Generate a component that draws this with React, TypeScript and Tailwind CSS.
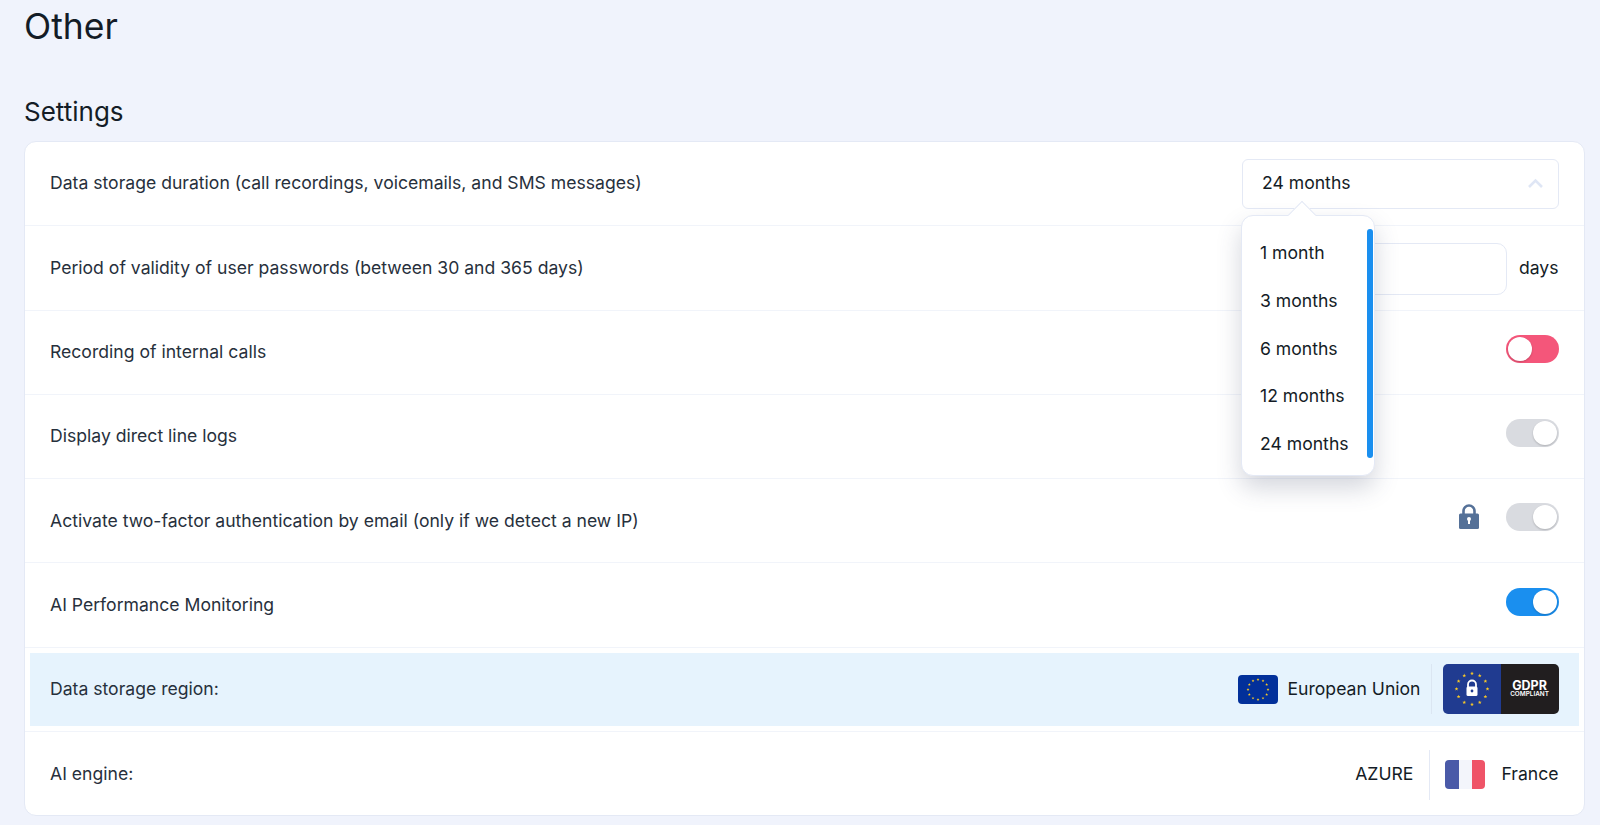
const font = { fontFamily: "Inter, 'Liberation Sans', sans-serif" };

function Toggle({ tone, on }: { tone: "pink" | "gray" | "blue"; on: boolean }) {
  const bg = tone === "pink" ? "bg-[#f4567a]" : tone === "blue" ? "bg-[#1a8fef]" : "bg-[#d9dbe0]";
  return (
    <div className={`mb-[7px] flex h-[28px] w-[53px] items-center rounded-full p-[2px] ${bg} ${on ? "justify-end" : "justify-start"}`}>
      <div className="h-[24px] w-[24px] rounded-full bg-white shadow-[0_1px_2px_rgba(0,0,0,0.2)]" />
    </div>
  );
}

function starPoints(x: number, y: number, r: number) {
  const pts: string[] = [];
  for (let i = 0; i < 10; i++) {
    const a = -Math.PI / 2 + (i * Math.PI) / 5;
    const d = i % 2 === 0 ? r : r * 0.42;
    pts.push(`${x + Math.cos(a) * d},${y + Math.sin(a) * d}`);
  }
  return pts.join(" ");
}

function Stars({ cx, cy, r, size }: { cx: number; cy: number; r: number; size: number }) {
  return (
    <>
      {Array.from({ length: 12 }).map((_, i) => {
        const a = (i / 12) * Math.PI * 2;
        return <polygon key={i} points={starPoints(cx + Math.cos(a) * r, cy + Math.sin(a) * r, size)} fill="#f6c728" />;
      })}
    </>
  );
}

function EuFlag() {
  return (
    <svg width="40" height="29" viewBox="0 0 40 29" className="shrink-0">
      <rect width="40" height="29" rx="4" fill="#02309a" />
      <Stars cx={20} cy={14.5} r={10} size={1.5} />
    </svg>
  );
}

function FranceFlag() {
  return (
    <div className="flex h-[29px] w-[40px] shrink-0 overflow-hidden rounded-[4px]">
      <div className="flex-1 bg-[#4a5aa8]" />
      <div className="flex-1 bg-[#f3f5fb]" />
      <div className="flex-1 bg-[#ef5468]" />
    </div>
  );
}

function GdprBadge() {
  return (
    <div className="flex h-[50px] w-[116px] overflow-hidden rounded-[5px]">
      <div className="flex w-[58px] items-center justify-center bg-[#203b90]">
        <svg width="40" height="40" viewBox="0 0 40 40">
          <Stars cx={20} cy={20} r={15.5} size={2} />
          <path d="M16 18v-2.5a4 4 0 0 1 8 0V18" fill="none" stroke="#fff" strokeWidth="1.8" />
          <rect x="14.5" y="17.5" width="11" height="9.5" rx="1.5" fill="#fff" />
          <circle cx="20" cy="22" r="1.4" fill="#203b90" />
        </svg>
      </div>
      <div className="flex w-[58px] flex-col items-center justify-center bg-[#211e1f] text-white">
        <span className="text-[12.5px] leading-[11px] font-bold">GDPR</span>
        <span className="text-[6.4px] leading-[7px] font-semibold">COMPLIANT</span>
      </div>
    </div>
  );
}

function Row({ label, children, last }: { label: string; children?: React.ReactNode; last?: boolean }) {
  return (
    <div className={`flex items-center justify-between pr-[25.5px] pl-[25px] ${last ? "h-[83px] pt-[2px]" : "h-[84.3px] border-b border-[#f1f4fa]"}`}>
      <span className="text-[17.6px] text-[#27303c]">{label}</span>
      {children}
    </div>
  );
}

export default function App() {
  const options = ["1 month", "3 months", "6 months", "12 months", "24 months"];
  return (
    <div style={font} className="h-[825px] overflow-hidden bg-[#f0f3fc] px-[24px] text-[#141c26]">
      <h1 className="pt-[5px] text-[35.5px] leading-[44px] font-normal">Other</h1>
      <h2 className="mt-[47px] text-[26px] leading-[32px] font-normal">Settings</h2>
      <div className="mt-[13px] mr-[-9px] rounded-[12px] border border-[#e4e9f5] bg-white">
        <Row label="Data storage duration (call recordings, voicemails, and SMS messages)">
          <div className="relative h-[50px] w-[316.5px]">
            <div className="flex h-full items-center justify-between rounded-[6px] border border-[#e4e9f5] pr-[14px] pl-[19px] text-[17.6px]">
              <span>24 months</span>
              <svg width="17" height="11" viewBox="0 0 17 11" fill="none">
                <path d="M2 9l6.5-6.5L15 9" stroke="#dfe6f5" strokeWidth="2.6" />
              </svg>
            </div>
            <div className="absolute top-[56px] left-[-1px] z-10 h-[261px] w-[134px] rounded-[12px] border border-[#e4e9f5] bg-white shadow-[0_12px_24px_rgba(60,70,100,0.22)]">
              <div className="absolute top-[-11px] left-[50px] h-[20px] w-[20px] rotate-45 border-t border-l border-[#e4e9f5] bg-white" />
              <div className="absolute top-[13px] right-[1px] h-[229px] w-[6px] rounded-full bg-[#1a8fef]" />
              <ul className="relative flex flex-col pt-[14px] pl-[18px] text-[17.6px]">
                {options.map((o) => (
                  <li key={o} className="flex h-[47.7px] items-center">{o}</li>
                ))}
              </ul>
            </div>
          </div>
        </Row>
        <Row label="Period of validity of user passwords (between 30 and 365 days)">
          <div className="flex items-center gap-[12px]">
            <div className="mt-[2px] h-[52px] w-[264px] rounded-[10px] border border-[#e4e9f5]" />
            <span className="text-[17.6px]">days</span>
          </div>
        </Row>
        <Row label="Recording of internal calls">
          <Toggle tone="pink" on={false} />
        </Row>
        <Row label="Display direct line logs">
          <Toggle tone="gray" on />
        </Row>
        <Row label="Activate two-factor authentication by email (only if we detect a new IP)">
          <div className="flex items-center gap-[27px]">
            <svg width="20" height="25" viewBox="0 0 20 25" className="mb-[9px]">
              <path d="M4.5 11V7a5.5 5.5 0 0 1 11 0v4" fill="none" stroke="#557198" strokeWidth="2.6" />
              <rect y="9.5" width="20" height="15.5" rx="1.5" fill="#557198" />
              <circle cx="10" cy="15" r="2" fill="#fff" />
              <rect x="9" y="15" width="2" height="5" fill="#fff" />
            </svg>
            <Toggle tone="gray" on />
          </div>
        </Row>
        <Row label="AI Performance Monitoring">
          <Toggle tone="blue" on />
        </Row>
        <div className="flex h-[84.3px] items-center border-b border-[#f1f4fa] pr-[5px] pl-[5px]">
          <div className="flex h-[73px] w-full items-center justify-between bg-[#e6f3fd] pr-[20.5px] pl-[20px]">
            <span className="text-[17.6px] text-[#27303c]">Data storage region:</span>
            <div className="flex items-center">
              <EuFlag />
              <span className="ml-[10px] text-[17.6px]">European Union</span>
              <div className="mr-[11px] ml-[10px] h-[50px] w-px bg-[#dbe6f2]" />
              <GdprBadge />
            </div>
          </div>
        </div>
        <Row label="AI engine:" last>
          <div className="flex items-center">
            <span className="text-[17.6px]">AZURE</span>
            <div className="mr-[15px] ml-[16px] h-[50px] w-px bg-[#e4e9f5]" />
            <FranceFlag />
            <span className="ml-[16px] text-[17.6px]">France</span>
          </div>
        </Row>
      </div>
    </div>
  );
}
